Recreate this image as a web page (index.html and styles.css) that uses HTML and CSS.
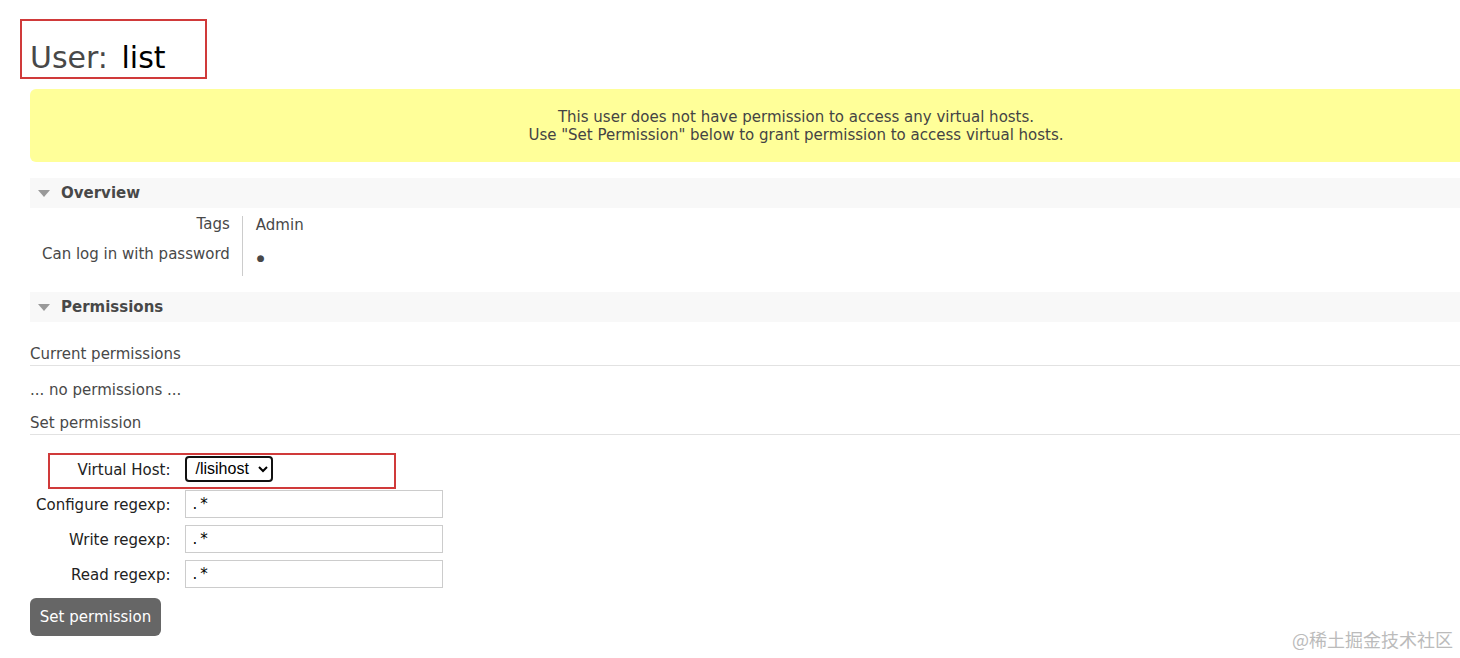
FILE: index.html
```html
<!DOCTYPE html>
<html lang="en">
<head>
    <meta charset="UTF-8">
    <title>User: list</title>
    <link rel="stylesheet" href="styles.css">
</head>
<body>
    <div class="main">
        <h1><span class="h1-label">User:</span> <b>list</b></h1>

        <div class="bad">
            This user does not have permission to access any virtual hosts.<br>
            Use "Set Permission" below to grant permission to access virtual hosts.
        </div>

        <div class="section">
            <h2><span class="arrow"></span>Overview</h2>
            <table class="facts">
                <tr>
                    <th>Tags</th>
                    <td>Admin</td>
                </tr>
                <tr>
                    <th>Can log in with password</th>
                    <td class="dot">&#9679;</td>
                </tr>
            </table>
        </div>

        <div class="section">
            <h2><span class="arrow"></span>Permissions</h2>
            <h3>Current permissions</h3>
            <p>... no permissions ...</p>
            <h3>Set permission</h3>
            <form class="perm-form">
                <table class="form">
                    <tr>
                        <th><label>Virtual Host:</label></th>
                        <td>
                            <select class="vhost">
                                <option>/lisihost</option>
                            </select>
                        </td>
                    </tr>
                    <tr>
                        <th><label>Configure regexp:</label></th>
                        <td><input type="text" value=".*"></td>
                    </tr>
                    <tr>
                        <th><label>Write regexp:</label></th>
                        <td><input type="text" value=".*"></td>
                    </tr>
                    <tr>
                        <th><label>Read regexp:</label></th>
                        <td><input type="text" value=".*"></td>
                    </tr>
                </table>
                <button type="button" class="btn">Set permission</button>
            </form>
        </div>
    </div>

    <!-- 스크린샷 위의 빨간 표시 -->
    <div class="mark mark-title"></div>
    <div class="mark mark-vhost"></div>
    <div class="watermark">@稀土掘金技术社区</div>
</body>
</html>
```

FILE: styles.css
```css
body {
    margin: 0;
    font-family: "DejaVu Sans", Verdana, sans-serif;
    font-size: 15px;
    color: #484848;
    background: #fff;
    overflow: hidden;
}
.main {
    padding: 36px 0 0 30px;
}
h1 {
    font-size: 30px;
    font-weight: normal;
    margin: 0 0 9px 0;
    line-height: 44px;
}
h1 b {
    font-weight: normal;
    color: #000;
    margin-left: 4px;
}
.bad {
    background-color: #ffff99;
    border-radius: 6px 0 0 6px;
    /* 원래 페이지는 화면보다 넓어서 글자가 오른쪽으로 치우쳐 있음 */
    padding: 19px 0 18px 102px;
    text-align: center;
    line-height: 18px;
    color: #444;
    margin-bottom: 16px;
}
.section {
    margin-bottom: 16px;
}
h2 {
    background-color: #f8f8f8;
    font-size: 15px;
    font-weight: bold;
    margin: 0;
    height: 30px;
    padding-left: 8px;
    display: flex;
    align-items: center;
}
.arrow {
    width: 0;
    height: 0;
    border-left: 6px solid transparent;
    border-right: 6px solid transparent;
    border-top: 7px solid #999;
    margin-right: 11px;
}
.facts {
    border-collapse: collapse;
    margin-top: 8px;
}
.facts th {
    font-weight: normal;
    text-align: right;
    padding: 0 12px 14px 12px;
    border-right: 1px solid #ccc;
    line-height: 16px;
    vertical-align: top;
}
.facts td {
    padding: 1px 14px 0 13px;
    line-height: 16px;
    vertical-align: top;
}
.facts .dot {
    font-size: 9px;
    padding: 4px 14px 0 14px;
}
h3 {
    font-size: 15px;
    font-weight: normal;
    margin: 23px 0 0 0;
    padding-bottom: 2px;
    border-bottom: 1px solid #e2e2e2;
    line-height: 18px;
}
p {
    margin: 15px 0 15px 0;
    line-height: 18px;
}
h3 + p + h3 {
    margin-top: 0;
}
.form {
    border-collapse: collapse;
    margin-top: 16px;
}
.form th {
    font-weight: normal;
    text-align: right;
    padding: 3px 13px 0 6px;
    color: #222;
    height: 35px;
    box-sizing: border-box;
}
.form td {
    padding: 0 0 0 2px;
}
.vhost {
    font-family: "Liberation Sans", Arial, sans-serif;
    font-size: 16px;
    color: #000;
    border: 2px solid #111;
    border-radius: 4px;
    background: #fff;
    width: 88px;
    height: 26px;
    padding: 0 2px 0 4px;
}
.form input {
    width: 258px;
    height: 28px;
    box-sizing: border-box;
    border: 1px solid #ccc;
    font-family: "DejaVu Sans", Verdana, sans-serif;
    font-size: 15px;
    padding: 0 6px;
    color: #000;
    letter-spacing: 3px;
}
.btn {
    display: block;
    margin-top: 7px;
    background-color: #666;
    color: #fff;
    border: none;
    border-radius: 6px;
    font-family: "DejaVu Sans", Verdana, sans-serif;
    font-size: 15px;
    height: 38px;
    width: 131px;
    padding: 0;
}
.mark {
    position: absolute;
    border: 2px solid #d03a3a;
}
.mark-title {
    left: 20px;
    top: 19px;
    width: 183px;
    height: 56px;
}
.mark-vhost {
    left: 48px;
    top: 453px;
    width: 344px;
    height: 32px;
}
.watermark {
    position: absolute;
    right: 7px;
    bottom: 6px;
    font-family: "Noto Sans CJK SC", sans-serif;
    font-size: 18px;
    color: #bbb;
}
```
